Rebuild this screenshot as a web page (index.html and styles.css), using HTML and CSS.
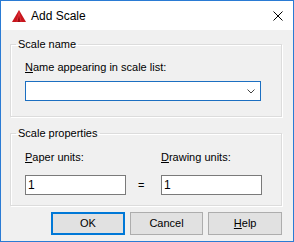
FILE: index.html
```html
<!DOCTYPE html>
<html lang="en">

<head>
  <meta charset="utf-8">
  <title>Add Scale</title>

  <link rel="stylesheet" href="styles.css">

</head>

<body>
    <div class="dialog">

        <div class="titlebar">
            <svg class="app-icon" width="14" height="12" viewBox="0 0 14 12">
                <polygon points="7,0 14,12 0,12" fill="#c8161d"/>
                <polygon points="7,0 9.5,12 4.5,12" fill="#e0323a"/>
                <polygon points="7,5 8.6,12 5.4,12" fill="#9e0f14"/>
            </svg>
            <span class="title">Add Scale</span>
            <svg class="close" width="10" height="10" viewBox="0 0 10 10">
                <path d="M0.5 0.5 L9.5 9.5 M9.5 0.5 L0.5 9.5" stroke="#000" stroke-width="1"/>
            </svg>
        </div>

        <div class="content">

            <fieldset class="group group-name">
                <legend>Scale name</legend>
                <div class="group-inner">
                    <label class="field-label"><u>N</u>ame appearing in scale list:</label>
                    <div class="combo">
                        <svg class="chevron" width="8" height="5" viewBox="0 0 8 5">
                            <polyline points="0.5,0.5 4,4 7.5,0.5" fill="none" stroke="#444" stroke-width="1"/>
                        </svg>
                    </div>
                </div>
            </fieldset>

            <fieldset class="group group-props">
                <legend>Scale properties</legend>
                <div class="group-inner units">
                    <div class="unit">
                        <label class="field-label"><u>P</u>aper units:</label>
                        <div class="textbox">1</div>
                    </div>
                    <span class="equals">=</span>
                    <div class="unit">
                        <label class="field-label"><u>D</u>rawing units:</label>
                        <div class="textbox">1</div>
                    </div>
                </div>
            </fieldset>

            <div class="buttons">
                <div class="btn btn-default">OK</div>
                <div class="btn">Cancel</div>
                <div class="btn"><u>H</u>elp</div>
            </div>

        </div>

    </div>
</body>

</html>
```

FILE: styles.css
```css
body {
	margin: 0;
	font-family: "Liberation Sans", Arial, sans-serif;
	font-size: 11px;
	color: #000;
}

.dialog {
	width: 294px;
	height: 242px;
	box-sizing: border-box;
	border: 1px solid #2a7bd4;
	background: #f0f0f0;
	display: flex;
	flex-direction: column;
}

.titlebar {
	height: 29px;
	background: #fff;
	display: flex;
	align-items: center;
	padding-left: 11px;
}

.title {
	margin-left: 5px;
	font-size: 12px;
	line-height: 14px;
}

.close {
	margin-left: auto;
	margin-right: 10px;
}

.content {
	padding: 0 11px 0 9px;
}

.group {
	margin: 0;
	padding: 0 11px 0 5px;
	border: 1px solid #dcdcdc;
	box-shadow: inset 1px 1px 0 #fff, 1px 1px 0 #fff;
	min-width: 0;
}

.group legend {
	padding: 0 2px;
	line-height: 13px;
}

.group-name {
	margin-top: 8px;
}

.group-props {
	margin-top: 10px;
}

.group-inner {
	padding-left: 9px;
}

.field-label {
	display: block;
	line-height: 13px;
}

.group-name .group-inner {
	padding-top: 10px;
	padding-bottom: 15px;
}

.combo {
	margin-top: 7px;
	width: 236px;
	height: 20px;
	box-sizing: border-box;
	border: 1px solid #1c6fc1;
	background: #fff;
	display: flex;
	align-items: center;
	justify-content: flex-end;
	padding-right: 5px;
}

.units {
	display: grid;
	grid-template-columns: 101px 35px 101px;
	padding-top: 11px;
	padding-bottom: 10px;
}

.textbox {
	margin-top: 11px;
	height: 20px;
	box-sizing: border-box;
	border: 1px solid #7a7a7a;
	background: #fff;
	padding-left: 2px;
	font-size: 12px;
	line-height: 18px;
}

.equals {
	align-self: end;
	line-height: 20px;
	padding-left: 12px;
}

.buttons {
	display: flex;
	gap: 5px;
	margin-top: 6px;
	padding-left: 41px;
}

.btn {
	width: 75px;
	height: 23px;
	box-sizing: border-box;
	border: 1px solid #adadad;
	background: #e1e1e1;
	text-align: center;
	line-height: 21px;
}

.btn-default {
	border-color: #0078d7;
	box-shadow: inset 0 0 0 1px #0078d7;
}
```
